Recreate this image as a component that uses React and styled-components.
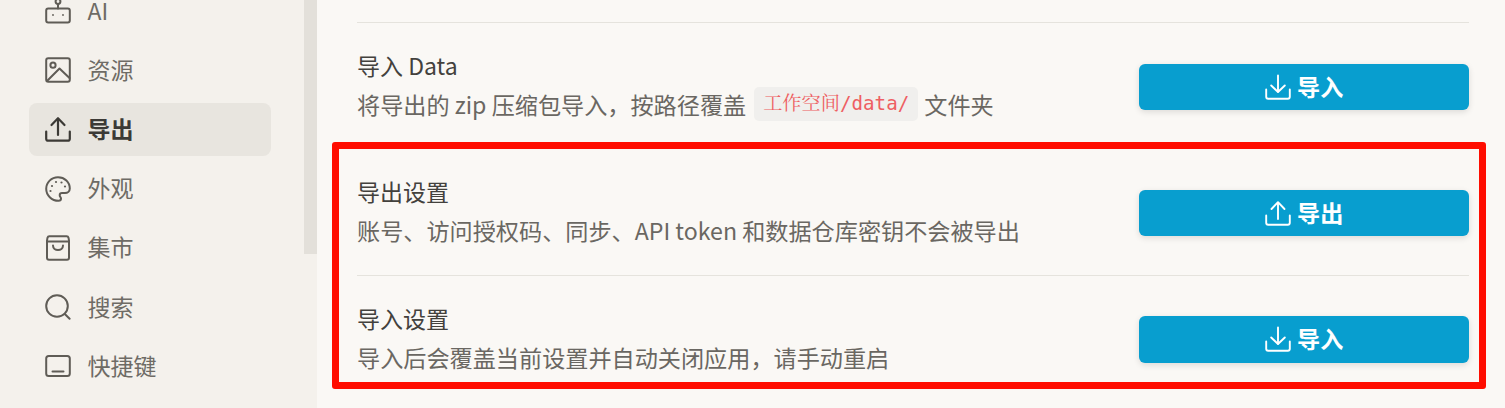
import React from "react";
import styled, { createGlobalStyle } from "styled-components";

const Global = createGlobalStyle`
  html, body { margin: 0; padding: 0; height: 100%; overflow: hidden; background: #faf8f5; }
  body { font-family: "Noto Sans CJK SC", "Noto Sans", sans-serif; }
`;

const Page = styled.div`
  position: relative;
  display: flex;
  width: 1505px;
  height: 408px;
  overflow: hidden;
  background: #faf8f5;
`;

const Sidebar = styled.aside`
  display: flex;
  flex: 0 0 317px;
  height: 408px;
  overflow: hidden;
  background: #f4f1ec;
`;

const Nav = styled.nav`
  flex: 1;
  display: flex;
  flex-direction: column;
  gap: 6.2px;
  margin-top: -15.4px;
  padding: 0 33px 0 29px;
`;

const NavItem = styled.div`
  display: flex;
  flex: 0 0 53px;
  align-items: center;
  gap: 16.5px;
  padding-left: 16px;
  border-radius: 8px;
  font-size: 23px;
  font-weight: ${(p) => (p.$active ? 700 : 400)};
  color: ${(p) => (p.$active ? "#3c3a36" : "#6e6b65")};
  background: ${(p) => (p.$active ? "#e8e5df" : "transparent")};
  svg { flex: 0 0 26px; color: ${(p) => (p.$active ? "#3c3a36" : "#5f5c56")}; }
`;

const NavLabel = styled.span`
  margin-top: -3px;
`;

const ScrollTrack = styled.div`
  flex: 0 0 13px;
`;

const ScrollThumb = styled.div`
  height: 254px;
  background: #e3e0da;
`;

const Main = styled.main`
  flex: 1;
  margin-top: 22px;
  padding: 0 36px 0 40px;
`;

const Row = styled.section`
  display: flex;
  align-items: center;
  justify-content: space-between;
  height: 126.3px;
  box-sizing: border-box;
  border-top: 1.5px solid #e5e3dd;
`;

const RowText = styled.div`
  display: flex;
  flex-direction: column;
  gap: 5px;
  margin-top: -2px;
`;

const Title = styled.div`
  font-size: 23px;
  line-height: 34px;
  color: #43413d;
`;

const Desc = styled.div`
  font-size: 23.15px;
  line-height: 34px;
  color: #6a6762;
  white-space: nowrap;
`;

const Code = styled.code`
  display: inline-block;
  margin: 0 6px 0 8px;
  padding: 0 9px;
  height: 34px;
  line-height: 34px;
  border-radius: 5px;
  background: #f0efed;
  color: #ee5f63;
  font-family: "DejaVu Sans Mono", "Liberation Mono", "Noto Serif CJK SC", monospace;
  font-size: 19.2px;
  vertical-align: top;
`;

const Button = styled.button`
  display: flex;
  flex: 0 0 330px;
  align-items: center;
  justify-content: center;
  gap: 6.5px;
  height: 46.3px;
  margin-top: 2.5px;
  padding: 0;
  border: 0;
  border-radius: 6px;
  background: #089ecf;
  color: #fff;
  font-family: inherit;
  font-size: 23.15px;
  font-weight: 700;
  box-shadow: 0 2px 6px rgba(0, 0, 0, 0.12);
`;

const ButtonLabel = styled.span`
  margin-top: -2px;
`;

const Highlight = styled.div`
  position: absolute;
  left: 331.5px;
  top: 142px;
  width: 1154px;
  height: 247px;
  box-sizing: border-box;
  border: 7px solid #ff0d00;
  border-radius: 3px;
  pointer-events: none;
`;

const Svg = ({ children, ...rest }) => (
  <svg width="26" height="26" viewBox="0 0 26 26" fill="none" stroke="currentColor" strokeWidth="2" strokeLinecap="round" strokeLinejoin="round" {...rest}>
    {children}
  </svg>
);

const BotIcon = () => (
  <Svg>
    <circle cx="13" cy="3.5" r="2.4" />
    <path d="M13 6v4.5" />
    <rect x="1.2" y="10.5" width="23.6" height="14" rx="2" />
    <circle cx="8" cy="17" r="0.9" fill="currentColor" stroke="none" />
    <circle cx="18" cy="17" r="0.9" fill="currentColor" stroke="none" />
  </Svg>
);
const ImageIcon = () => (
  <Svg>
    <rect x="1.2" y="1.2" width="23.6" height="23.6" rx="2" />
    <circle cx="8" cy="8.2" r="2.6" />
    <path d="M2 24l12.5-12.5 10 9.5" />
  </Svg>
);
const UploadIcon = ({ thin }) => (
  <Svg strokeWidth={thin ? 1.9 : 2.2}>
    <path d="M13 19V3" />
    <path d="M6.5 9L13 2.2 19.5 9" />
    <path d="M1.2 15.5v7.2a2 2 0 0 0 2 2h19.6a2 2 0 0 0 2-2v-7.2" />
  </Svg>
);
const DownloadIcon = () => (
  <Svg strokeWidth="1.9">
    <path d="M13 1.5v16" />
    <path d="M6.2 11.5L13 18l6.8-6.5" />
    <path d="M1.2 15.5v7.2a2 2 0 0 0 2 2h19.6a2 2 0 0 0 2-2v-7.2" />
  </Svg>
);
const PaletteIcon = () => (
  <Svg>
    <path d="M13 1.2C6.4 1.2 1.2 6.4 1.2 12.8S6.6 24.8 13.6 24.8c1.6 0 2.4-1 2.4-2.2 0-.7-.3-1.2-.7-1.7-.4-.5-.6-1-.6-1.6 0-1.3 1-2.2 2.3-2.2h3c2.7 0 4.8-2 4.8-4.6C24.8 6 19.6 1.2 13 1.2z" />
    <circle cx="7" cy="10" r="1.1" fill="currentColor" stroke="none" />
    <circle cx="11" cy="6" r="1.1" fill="currentColor" stroke="none" />
    <circle cx="16.5" cy="6.5" r="1.1" fill="currentColor" stroke="none" />
    <circle cx="20" cy="10.5" r="1.1" fill="currentColor" stroke="none" />
    <circle cx="5.5" cy="15" r="1.1" fill="currentColor" stroke="none" />
  </Svg>
);
const BagIcon = () => (
  <Svg>
    <path d="M4.5 1.2h17a2 2 0 0 1 2 1.5l.5 3v17a2 2 0 0 1-2 2H4a2 2 0 0 1-2-2v-17l.5-3a2 2 0 0 1 2-1.5z" />
    <path d="M2 6.5h22" />
    <path d="M8 10.5c0 6 10 6 10 0" />
  </Svg>
);
const SearchIcon = () => (
  <Svg>
    <circle cx="12" cy="12" r="10.8" />
    <path d="M19.8 20l4.8 4.8" />
  </Svg>
);
const KeyboardIcon = () => (
  <Svg>
    <rect x="1.2" y="3" width="23.6" height="20" rx="2.5" />
    <path d="M7.5 18.5h11" />
  </Svg>
);

const navItems = [
  { icon: BotIcon, label: "AI" },
  { icon: ImageIcon, label: "资源" },
  { icon: UploadIcon, label: "导出", active: true },
  { icon: PaletteIcon, label: "外观" },
  { icon: BagIcon, label: "集市" },
  { icon: SearchIcon, label: "搜索" },
  { icon: KeyboardIcon, label: "快捷键" },
];

export default function App() {
  return (
    <Page>
      <Global />
      <Sidebar>
        <Nav>
          {navItems.map(({ icon: Icon, label, active }) => (
            <NavItem key={label} $active={active}>
              <Icon />
              <NavLabel>{label}</NavLabel>
            </NavItem>
          ))}
        </Nav>
        <ScrollTrack>
          <ScrollThumb />
        </ScrollTrack>
      </Sidebar>
      <Main>
        <Row>
          <RowText>
            <Title>导入 Data</Title>
            <Desc>
              将导出的 zip 压缩包导入，按路径覆盖<Code>工作空间/data/</Code>文件夹
            </Desc>
          </RowText>
          <Button>
            <DownloadIcon />
            <ButtonLabel>导入</ButtonLabel>
          </Button>
        </Row>
        <Row>
          <RowText>
            <Title>导出设置</Title>
            <Desc>账号、访问授权码、同步、API token 和数据仓库密钥不会被导出</Desc>
          </RowText>
          <Button>
            <UploadIcon thin />
            <ButtonLabel>导出</ButtonLabel>
          </Button>
        </Row>
        <Row>
          <RowText>
            <Title>导入设置</Title>
            <Desc>导入后会覆盖当前设置并自动关闭应用，请手动重启</Desc>
          </RowText>
          <Button>
            <DownloadIcon />
            <ButtonLabel>导入</ButtonLabel>
          </Button>
        </Row>
      </Main>
      <Highlight />
    </Page>
  );
}
